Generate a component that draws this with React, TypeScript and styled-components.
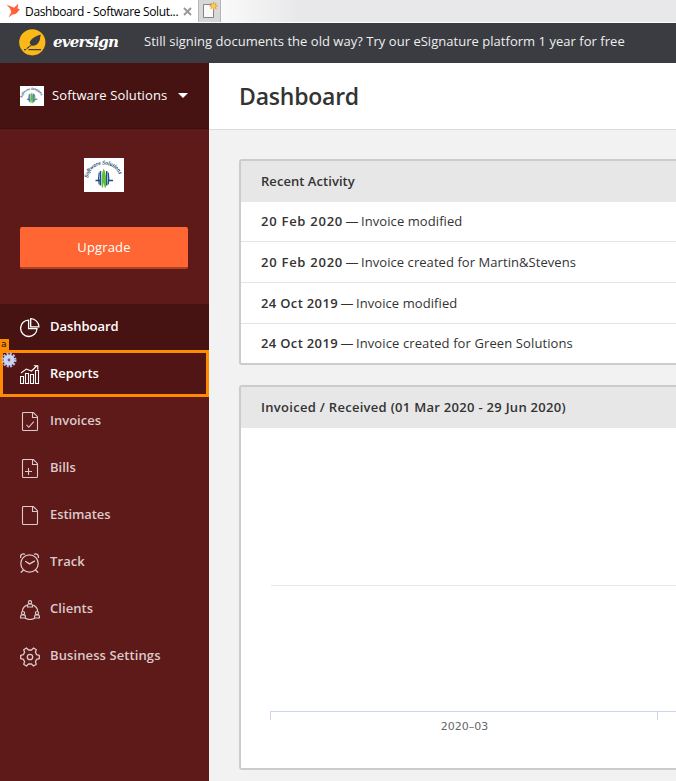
import React from "react";
import styled, { createGlobalStyle, css } from "styled-components";

const Global = createGlobalStyle`
  * { box-sizing: border-box; }
  html, body { margin: 0; padding: 0; overflow: hidden; }
  body { font-family: "Open Sans", "Noto Sans", sans-serif; font-size: 13px; color: #333; }
`;

const Page = styled.div`
  width: 676px;
  height: 781px;
  overflow: hidden;
  background: #f2f2f2;
  display: flex;
  flex-direction: column;
`;

const Label = styled.span<{ $ls?: number }>`
  letter-spacing: ${(p) => p.$ls ?? 0}px;
  white-space: nowrap;
`;

const TabBar = styled.div`
  height: 23px;
  flex: none;
  display: flex;
  background: linear-gradient(90deg, #fafafa 221px, #e8e8ea 300px);
  border-bottom: 1px solid #fcfcfc;
`;

const Tab = styled.div`
  width: 198px;
  display: flex;
  align-items: center;
  padding-left: 6px;
  background: #fff;
  font-size: 12px;
  color: #000;
  svg { flex: none; display: block; }
`;

const TabTitle = styled.div`
  width: 162px;
  flex: none;
  padding: 2px 0 0 4px;
  line-height: 20px;
`;

const NewTab = styled.div`
  width: 23px;
  background: #d8d8d8;
  border: solid #b5b5b5;
  border-width: 0 1px;
  padding: 2px 0 0 4px;
  svg { display: block; }
`;

const Banner = styled.div`
  height: 40px;
  flex: none;
  display: flex;
  align-items: center;
  background: #3a3c41;
  color: #eee;
  padding: 0 0 4px 19px;
`;

const Brand = styled.div`
  width: 125px;
  display: flex;
  align-items: center;
  gap: 7px;
  color: #fff;
  svg { display: block; margin-top: 3px; }
`;

const BrandName = styled.span`
  font: italic bold 15px/20px "DejaVu Serif", serif;
  letter-spacing: -0.75px;
  margin-top: 1px;
`;

const Columns = styled.div`
  flex: 1;
  display: flex;
`;

const Sidebar = styled.aside`
  width: 209px;
  flex: none;
  background: #5e1919;
  color: #fff;
`;

const Account = styled.div`
  height: 66px;
  display: flex;
  align-items: center;
  background: #461212;
  border-bottom: 1px solid #3b0d0d;
  padding-left: 20px;
  svg { flex: none; }
`;

const AccountName = styled.div`
  width: 134px;
  padding: 0 0 2px 8px;
`;

const Promo = styled.div`
  height: 175px;
  padding: 29px 21px 0 20px;
  display: flex;
  flex-direction: column;
  align-items: center;
  svg { display: block; }
`;

const Upgrade = styled.button`
  width: 168px;
  height: 42px;
  margin-top: 35px;
  padding: 0 0 1px;
  border: 0;
  border-bottom: 2px solid #aa4422;
  border-radius: 2px;
  background: #ff6633;
  color: #fff;
  font: 13px "Open Sans", sans-serif;
`;

const NavItem = styled.div<{ $state?: "active" | "marked" }>`
  height: 47px;
  display: flex;
  align-items: center;
  padding-left: 20px;
  font-weight: 600;
  color: #dccaca;
  position: relative;
  > svg { flex: none; margin-top: 1px; }
  > span { margin-left: 10px; margin-bottom: 3px; }
  ${(p) => p.$state === "active" && css`background: #461212; color: #fff;`}
  ${(p) =>
    p.$state === "marked" &&
    css`
      background: #521515;
      color: #fff;
      margin-top: -1px;
      margin-bottom: 1px;
      box-shadow: inset 0 0 0 3px #ff8c00;
      > svg { margin-top: 3px; }
      > span { margin-bottom: 1px; }
    `}
`;

const Tag = styled.div`
  position: absolute;
  left: 0;
  top: -11px;
  width: 9px;
  height: 12px;
  background: #ff8c00;
  color: #111;
  font: 9px/11px "DejaVu Sans", sans-serif;
  padding-left: 1px;
`;

const Cog = styled.div`
  position: absolute;
  left: 1px;
  top: 2px;
  svg { display: block; }
`;

const Main = styled.main`
  flex: 1;
  min-width: 0;
`;

const Heading = styled.h1`
  margin: 0;
  height: 67px;
  padding: 0 0 1px 30px;
  background: #fff;
  border-bottom: 1px solid #dcdcdc;
  font-size: 23px;
  font-weight: 600;
  line-height: 66px;
  color: #333;
`;

const Cards = styled.div`
  padding: 29px 0 0 30px;
  display: flex;
  flex-direction: column;
  gap: 20px;
`;

const Card = styled.section`
  width: 460px;
  border: 2px solid #ccc;
  border-radius: 3px;
  background: #fff;
`;

const CardTitle = styled.div`
  height: 41px;
  line-height: 40px;
  padding-left: 20px;
  background: #e7e7e7;
  font-weight: 600;
`;

const Activity = styled.div<{ $h: number }>`
  height: ${(p) => p.$h}px;
  line-height: ${(p) => p.$h - 1}px;
  padding-left: 20px;
  display: flex;
  &:not(:last-child) { border-bottom: 1px solid #e4e4e4; }
`;

const When = styled(Label)`
  font-weight: 600;
`;

const Dash = styled.span`
  width: 18px;
  text-align: center;
`;

const ChartBody = styled.div`
  height: 340px;
  svg { display: block; }
`;

const Stroke = ({ children, w = 1.2 }: { children: React.ReactNode; w?: number }) => (
  <svg width="20" height="20" viewBox="0 0 20 20" fill="none" stroke="currentColor" strokeWidth={w}>
    {children}
  </svg>
);

const Sheet = ({ children }: { children?: React.ReactNode }) => (
  <Stroke w={1.1}>
    <path d="M3.5 .5h9.800l4.200 4.200v12.800q0 1-1 1h-13q-1 0-1-1v-16q0-1 1-1" />
    <path d="M12.500 .5v5h5" />
    {children}
  </Stroke>
);

const Pie = () => (
  <Stroke w={1.3}>
    <path d="M8.600 2.100a8.200 8.200 0 1 0 8.400 8.600H8.600z" />
    <path d="M10.700.7a8.300 8.300 0 0 1 8.200 8.200h-8.200z" />
  </Stroke>
);

const Bars = () => (
  <Stroke w={1.1}>
    <path d="M.5 11.500h3v7h-3zM5.500 8.500h3v10h-3zM10.500 9.500h3v9h-3zM15.500 5.500h3v13h-3z" />
    <path d="M1 8l5.300-4 5.200 2 5.200-5M13.800.7h4v4" />
  </Stroke>
);

const Clock = () => (
  <Stroke w={1.3}>
    <circle cx="9.500" cy="10.500" r="8.700" />
    <path d="M.8 5C-.2 2.300 2.500-.2 5 1.400M18.200 5c1-2.700-1.700-5.200-4.200-3.600M3.600 17L.8 19.600M15.400 17l2.800 2.600M5.200 8.200l4.400 2.700 5.300-3" />
  </Stroke>
);

const People = () => (
  <Stroke w={1.2}>
    <circle cx="10" cy="2.300" r="1.600" />
    <path d="M7.500 7V5.600q0-1.600 1.500-1.600h2q1.500 0 1.500 1.600V7z" />
    <circle cx="3" cy="13.100" r="1.600" />
    <path d="M.6 18v-1.500q0-1.700 1.500-1.700h1.800q1.500 0 1.500 1.700V18z" />
    <circle cx="17" cy="13.100" r="1.600" />
    <path d="M14.600 18v-1.500q0-1.700 1.500-1.700h1.800q1.500 0 1.500 1.700V18z" />
    <path d="M6.800 5.100Q2.500 7 2.400 11.200M13.200 5.100Q17.500 7 17.600 11.200M5.200 18.300q4.800 2.400 9.600 0" />
  </Stroke>
);

const Gear = () => (
  <Stroke w={1.3}>
    <path d="M.7 8.300l2.700-.7 1.200-2.300L3.700 2.700 6.400 1l2.100 2h3l2.100-2 2.700 1.700-.9 2.600 1.200 2.300 2.700.7v3.400l-2.700.7-1.200 2.300.9 2.600-2.700 1.700-2.100-2h-3l-2.100 2-2.700-1.700.9-2.600-1.200-2.300-2.700-.7z" strokeLinejoin="round" />
    <circle cx="10" cy="10" r="2.700" />
  </Stroke>
);

const CompanyLogo = ({ id, w, h }: { id: string; w: number; h: number }) => (
  <svg width={w} height={h} viewBox="0 0 40 34" preserveAspectRatio="none">
    <path d="M0 0h40v34H0z" fill="#fff" />
    <defs>
      <path id={id} d="M4 20C6 2 34 2 36 20.500" />
    </defs>
    <text fontFamily="Liberation Serif, serif" fontStyle="italic" fontSize="5.600" fill="#123c68" stroke="#123c68" strokeWidth=".15">
      <textPath href={`#${id}`}>Software Solutions</textPath>
    </text>
    <path d="M16.500 13v14.500M22.700 13v14.500M11.500 22.500h5M24 22.500h5" stroke="#1a5088" strokeWidth="1.400" />
    <path d="M15.200 14.500q-1.200 6 0 12M24.200 14.500q1.200 6 0 12" stroke="#1a5088" strokeWidth="1.200" fill="none" />
    <path d="M19.700 10.500q-2.800 5-1.900 19h1.200l.7-5 .9 5H22q.8-14-2.300-19z" fill="#67bd3c" />
  </svg>
);

const NAV: { name: string; icon: React.ReactNode; ls?: number; state?: "active" | "marked" }[] = [
  { name: "Dashboard", icon: <Pie />, ls: -0.03, state: "active" },
  { name: "Reports", icon: <Bars />, state: "marked" },
  { name: "Invoices", icon: <Sheet><path d="M6.500 12.800l2.300 2.500 5-5.600" /></Sheet> },
  { name: "Bills", icon: <Sheet><path d="M8.500 9v7M5 12.500h7" /></Sheet> },
  { name: "Estimates", icon: <Sheet />, ls: -0.1 },
  { name: "Track", icon: <Clock />, ls: 0.1 },
  { name: "Clients", icon: <People />, ls: 0.07 },
  { name: "Business Settings", icon: <Gear />, ls: 0.1 },
];

const ROWS = [
  { when: "20 Feb 2020", what: "Invoice modified", h: 40, a: 0.74, b: 0.08 },
  { when: "20 Feb 2020", what: "Invoice created for Martin&Stevens", h: 41, a: 0.74, b: 0.06 },
  { when: "24 Oct 2019", what: "Invoice modified", h: 41, a: 0.34, b: 0.08 },
  { when: "24 Oct 2019", what: "Invoice created for Green Solutions", h: 39, a: 0.34, b: 0.11 },
];

export default function App() {
  return (
    <Page>
      <Global />
      <TabBar>
        <Tab>
          <svg width="15" height="16" viewBox="0 0 15 16">
            <path d="M.5 1.500L8 4.800 12.300.8l-.8 4.700 2.500.7-2 2.300q-1.500 3-5.500 3L2.500 14.500 5.300 9 4 5.500z" fill="#ff6238" />
          </svg>
          <TabTitle><Label $ls={-0.33}>Dashboard - Software Solut...</Label></TabTitle>
          <svg width="9" height="9" viewBox="0 0 9 9"><path d="M1 1l7 7M8 1l-7 7" stroke="#999" strokeWidth="2" /></svg>
        </Tab>
        <NewTab>
          <svg width="17" height="18" viewBox="0 0 17 18">
            <path d="M.5 2.500h10v13H.5z" fill="#fafafa" stroke="#858585" />
            <path d="M10.500 0v8M6.500 4h8M7.700 1.200l5.600 5.600M13.300 1.200L7.700 6.800" stroke="#e2a63b" strokeWidth="1.300" />
            <circle cx="10.500" cy="4" r="2" fill="#f8cd5e" />
          </svg>
        </NewTab>
      </TabBar>
      <Banner>
        <Brand>
          <svg width="27" height="27" viewBox="0 0 27 27">
            <circle cx="13.300" cy="13.300" r="13.100" fill="#fbb917" />
            <path d="M12 15.800q-2.200-1.500-.3-4.300Q14 8 21.800 5.500q-.6 2-.8 4.500-1 4.500-4.500 6.200-2.500.8-4 .2l-4.300 3.600-.9-.8z" fill="#3a3c41" />
            <path d="M5 20.600h2.200M9.500 20.600H22" stroke="#3a3c41" strokeWidth="1.400" />
          </svg>
          <BrandName>eversign</BrandName>
        </Brand>
        <Label $ls={0.03}>Still signing documents the old way? Try our eSignature platform 1 year for free</Label>
      </Banner>
      <Columns>
        <Sidebar>
          <Account>
            <CompanyLogo id="arch-small" w={24} h={20} />
            <AccountName><Label $ls={0.11}>Software Solutions</Label></AccountName>
            <svg width="10" height="5" viewBox="0 0 10 5"><path d="M0 0h10L5 5z" fill="#fff" /></svg>
          </Account>
          <Promo>
            <CompanyLogo id="arch-large" w={40} h={34} />
            <Upgrade><Label $ls={0.15}>Upgrade</Label></Upgrade>
          </Promo>
          <nav>
            {NAV.map((item) => (
              <NavItem key={item.name} $state={item.state}>
                {item.icon}
                <Label $ls={item.ls}>{item.name}</Label>
                {item.state === "marked" && (
                  <>
                    <Tag>a</Tag>
                    <Cog>
                      <svg width="16" height="16" viewBox="0 0 16 16">
                        <circle cx="8" cy="8" r="6.300" fill="none" stroke="#b5bde4" strokeWidth="2.400" strokeDasharray="2 1.300" />
                        <circle cx="8" cy="8" r="5.500" fill="#ccd2f0" />
                        <circle cx="8" cy="8" r="1.400" fill="#59618c" />
                      </svg>
                    </Cog>
                  </>
                )}
              </NavItem>
            ))}
          </nav>
        </Sidebar>
        <Main>
          <Heading><Label $ls={-0.22}>Dashboard</Label></Heading>
          <Cards>
            <Card>
              <CardTitle><Label $ls={0.05}>Recent Activity</Label></CardTitle>
              {ROWS.map((row, i) => (
                <Activity key={i} $h={row.h}>
                  <When $ls={row.a}>{row.when}</When>
                  <Dash>—</Dash>
                  <Label $ls={row.b}>{row.what}</Label>
                </Activity>
              ))}
            </Card>
            <Card>
              <CardTitle><Label $ls={0.29}>Invoiced / Received (01 Mar 2020 - 29 Jun 2020)</Label></CardTitle>
              <ChartBody>
                <svg width="456" height="340" viewBox="0 0 456 340">
                  <path d="M30 157.500h426" stroke="#e6e6e6" />
                  <path d="M29 283.500h427M29.500 284v8M416.500 284v8" stroke="#ccd6eb" fill="none" />
                  <text x="223.500" y="302" textAnchor="middle" fontFamily="DejaVu Sans, sans-serif" fontSize="11" fill="#666">2020–03</text>
                </svg>
              </ChartBody>
            </Card>
          </Cards>
        </Main>
      </Columns>
    </Page>
  );
}
